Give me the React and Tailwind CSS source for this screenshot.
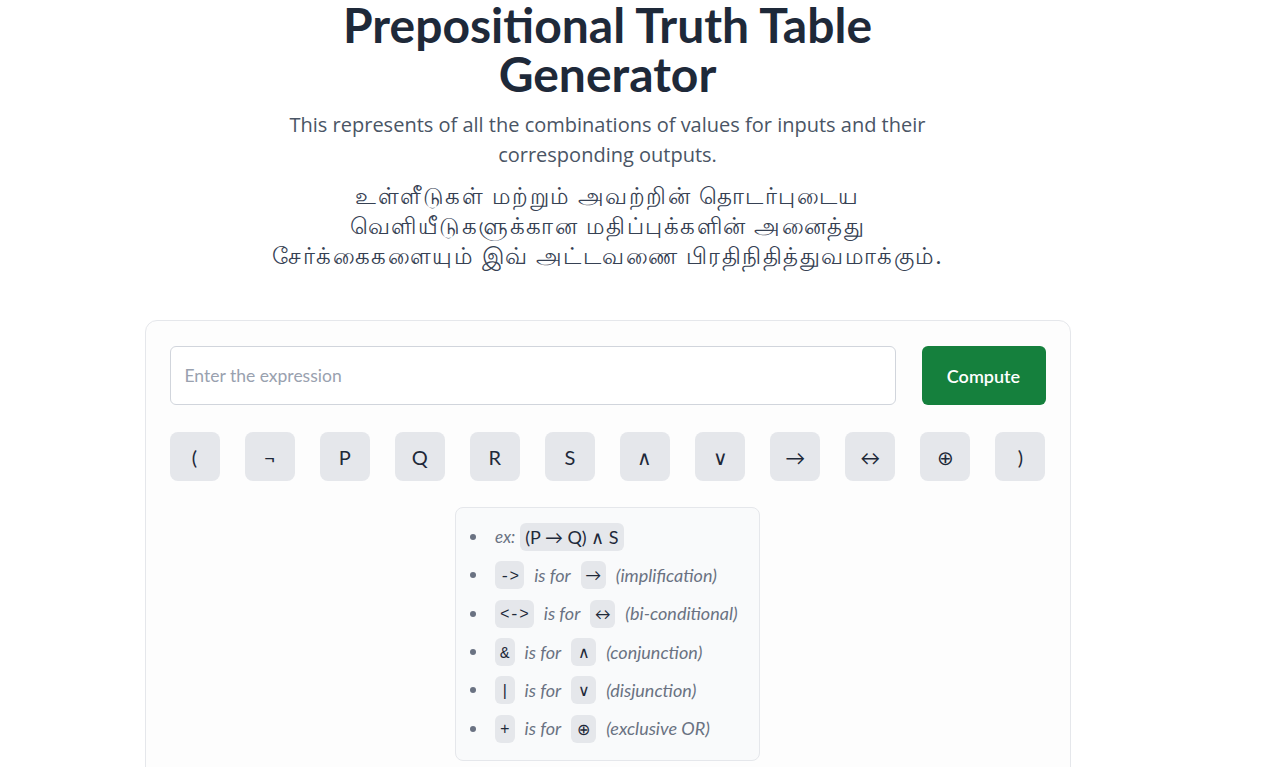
const keys = ['(', '¬', 'P', 'Q', 'R', 'S', '∧', '∨', '→', '↔', '⊕', ')']

const rules = [
  { code: '->', sym: '→', label: '(implification)' },
  { code: '<->', sym: '↔', label: '(bi-conditional)' },
  { code: '&', sym: '∧', label: '(conjunction)' },
  { code: '|', sym: '∨', label: '(disjunction)' },
  { code: '+', sym: '⊕', label: '(exclusive OR)' },
]

const Bullet = () => <span className="w-[6px] h-[6px] rounded-full bg-gray-500 mr-[19px] shrink-0" />

export default function App() {
  return (
    <div className="min-h-screen bg-white font-['Lato','Noto_Sans',sans-serif]">
      <div className="w-[1215px] flex flex-col items-center">
        <h1 className="text-[48px] leading-[49px] font-bold text-gray-800 text-center max-w-[600px]">
          Prepositional Truth Table Generator
        </h1>
        <p className="mt-[12px] font-['Open_Sans',sans-serif] text-[20px] leading-[30px] text-gray-600 text-center max-w-[660px]">
          This represents of all the combinations of values for inputs and their corresponding outputs.
        </p>
        <p className="mt-2.5 text-[23px] tracking-[1.5px] leading-[30px] text-gray-700 text-center">
          உள்ளீடுகள் மற்றும் அவற்றின் தொடர்புடைய<br />
          வெளியீடுகளுக்கான மதிப்புக்களின் அனைத்து<br />
          சேர்க்கைகளையும் இவ் அட்டவணை பிரதிநிதித்துவமாக்கும்.
        </p>

        <div className="mt-[50px] w-[926px] border border-gray-200 rounded-xl bg-[#fdfdfd] px-6 pt-[25px] pb-10">
          <div className="flex gap-[26px]">
            <input
              placeholder="Enter the expression"
              className="flex-1 h-[59px] rounded-md border border-gray-300 bg-white px-[14px] text-[17.5px] text-gray-800 placeholder:text-gray-400 outline-none"
            />
            <button className="w-[124px] h-[59px] rounded-md bg-[#15803d] text-white text-lg font-semibold">
              Compute
            </button>
          </div>

          <div className="mt-[27px] flex justify-between">
            {keys.map((k) => (
              <button key={k} className="w-[50px] h-[49px] rounded-lg bg-gray-200 text-xl text-gray-800 flex items-center justify-center">
                {k}
              </button>
            ))}
          </div>

          <div className="mt-[26px] mx-auto w-[305px] rounded-lg border border-gray-200 bg-gray-50 pl-[14px] pt-[10px] pb-[12px]">
            <div className="h-[38.3px] flex items-center">
              <Bullet />
              <span className="italic text-[17px] text-gray-500 mr-[5px]">ex:</span>
              <span className="bg-gray-200 rounded-md px-[5px] h-[28px] flex items-center text-lg text-gray-800">(P → Q) ∧ S</span>
            </div>
            {rules.map((r) => (
              <div key={r.code} className="h-[38.3px] flex items-center">
                <Bullet />
                <span className="bg-gray-200 rounded-md px-[5px] h-[28px] flex items-center pt-[3px] font-['Liberation_Mono',monospace] text-[16px] text-gray-800">{r.code}</span>
                <span className="italic text-[18px] text-gray-500 mx-[10px]">is for</span>
                <span className="bg-gray-200 rounded-md w-[25px] h-[28px] flex items-center justify-center text-base text-gray-800">{r.sym}</span>
                <span className="italic text-[18px] text-gray-500 ml-[10px]">{r.label}</span>
              </div>
            ))}
          </div>
        </div>
      </div>
    </div>
  )
}
